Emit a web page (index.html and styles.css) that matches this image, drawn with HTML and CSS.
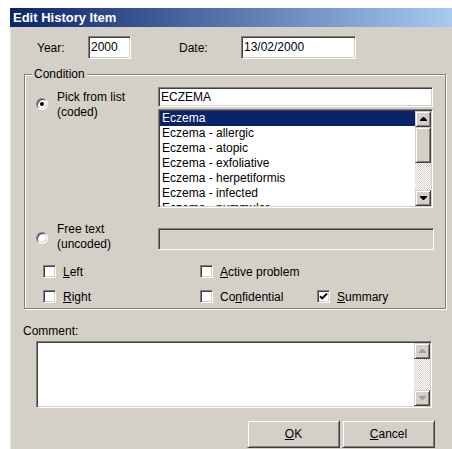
FILE: index.html
```html
<!DOCTYPE html>
<html>
<head>
<meta charset="utf-8">
<title>Edit History Item</title>
<link rel="stylesheet" href="styles.css">
</head>
<body>
<div class="page">
  <div class="dialog">
    <div class="titlebar">Edit History Item</div>

    <div class="daterow">
      <span class="lbl-year">Year:</span>
      <div class="field year">2000</div>
      <span class="lbl-date">Date:</span>
      <div class="field date">13/02/2000</div>
    </div>

    <div class="group">
      <span class="legend">Condition</span>
      <div class="cond-grid">
        <div class="opt opt-list">
          <span class="radio checked"></span>
          <span class="opt-text">Pick from list<br>(coded)</span>
        </div>
        <div class="picker">
          <div class="field search">ECZEMA</div>
          <div class="listbox">
            <div class="items">
              <div class="item selected">Eczema</div>
              <div class="item">Eczema - allergic</div>
              <div class="item">Eczema - atopic</div>
              <div class="item">Eczema - exfoliative</div>
              <div class="item">Eczema - herpetiformis</div>
              <div class="item">Eczema - infected</div>
              <div class="item">Eczema - nummular</div>
            </div>
            <div class="vscroll">
              <div class="sbtn"><svg width="7" height="4" viewBox="0 0 7 4"><path d="M3 0h1l3 3v1H0V3z"/></svg></div>
              <div class="thumb"></div>
              <div class="track"></div>
              <div class="sbtn"><svg width="7" height="4" viewBox="0 0 7 4"><path d="M0 0h7v1L4 4H3L0 1z"/></svg></div>
            </div>
          </div>
        </div>
        <div class="opt opt-free">
          <span class="radio"></span>
          <span class="opt-text">Free text<br>(uncoded)</span>
        </div>
        <div class="field freetext"></div>
      </div>

      <div class="checks">
        <label class="check"><span class="box"></span><span><u>L</u>eft</span></label>
        <label class="check"><span class="box"></span><span><u>A</u>ctive problem</span></label>
        <span></span>
        <label class="check"><span class="box"></span><span><u>R</u>ight</span></label>
        <label class="check"><span class="box"></span><span>Co<u>n</u>fidential</span></label>
        <label class="check"><span class="box"><svg width="9" height="9" viewBox="0 0 9 9"><path d="M1 4.2l2.2 2.2L8 1.6" stroke="#000" stroke-width="2" fill="none"/></svg></span><span><u>S</u>ummary</span></label>
      </div>
    </div>

    <div class="comment-lbl">Comment:</div>
    <div class="memo">
      <div class="memo-text"></div>
      <div class="vscroll disabled">
        <div class="sbtn"><svg width="7" height="4" viewBox="0 0 7 4"><path d="M3 0h1l3 3v1H0V3z"/></svg></div>
        <div class="track"></div>
        <div class="sbtn"><svg width="7" height="4" viewBox="0 0 7 4"><path d="M0 0h7v1L4 4H3L0 1z"/></svg></div>
      </div>
    </div>

    <div class="buttons">
      <button class="btn"><u>O</u>K</button>
      <button class="btn"><u>C</u>ancel</button>
    </div>
  </div>
</div>
</body>
</html>
```

FILE: styles.css
```css
* { box-sizing: border-box; }

html, body {
  margin: 0;
  background: #fff;
}

body {
  font-family: "Liberation Sans", Arial, sans-serif;
  font-size: 12px;
  color: #000;
}

.page {
  padding: 8px 0 0 10px;
}

.dialog {
  width: 442px;
  height: 441px;
  background: #d4d0c8;
  display: flex;
  flex-direction: column;
  box-shadow: inset 1px 0 0 #e4e2dc;
}

/* caption bar */
.titlebar {
  height: 19px;
  line-height: 19px;
  padding-left: 3px;
  font-weight: bold;
  font-size: 13px;
  color: #fff;
  background: linear-gradient(to right, #0a246a, #a6caf0);
  white-space: nowrap;
}

/* sunken edit field */
.field {
  background: #fff;
  border: 1px solid;
  border-color: #808080 #fff #fff #808080;
  box-shadow: inset 1px 1px 0 #404040, inset -1px -1px 0 #d4d0c8;
  padding: 0 2px;
  white-space: nowrap;
  overflow: hidden;
}

.daterow {
  display: flex;
  align-items: center;
  height: 23px;
  margin-top: 9px;
  padding-left: 27px;
}

.lbl-year { width: 51px; }

.year {
  width: 43px;
  height: 23px;
  line-height: 21px;
}

.lbl-date {
  margin-left: 48px;
  width: 62px;
}

.date {
  width: 115px;
  height: 23px;
  line-height: 21px;
}

/* etched group box */
.group {
  position: relative;
  margin: 15px 0 0 14px;
  width: 422px;
  height: 235px;
  border: 1px solid #808080;
  box-shadow: inset 1px 1px 0 #fff, 1px 1px 0 #fff;
  padding-top: 12px;
}

.legend {
  position: absolute;
  top: -8px;
  left: 7px;
  padding: 0 2px;
  line-height: 14px;
  background: #d4d0c8;
}

.cond-grid {
  display: grid;
  grid-template-columns: 133px 276px;
  row-gap: 14px;
}

.opt {
  display: flex;
  align-items: flex-start;
  padding-left: 11px;
  line-height: 15px;
}

.opt-list { margin-top: 3px; }

.opt-text { margin-left: 9px; }

.radio {
  position: relative;
  flex: none;
  width: 12px;
  height: 12px;
  border-radius: 50%;
  background: #fff;
  border: 1px solid;
  border-color: #808080 #fff #fff #808080;
  box-shadow: inset 1px 1px 0 #404040, inset -1px -1px 0 #d4d0c8;
}

.opt-list .radio { margin-top: 8px; }
.opt-free .radio { margin-top: 10px; }

.radio.checked::after {
  content: "";
  position: absolute;
  left: 3px;
  top: 3px;
  width: 4px;
  height: 4px;
  border-radius: 50%;
  background: #000;
}

.picker {
  display: flex;
  flex-direction: column;
  gap: 2px;
  width: 275px;
}

.search {
  height: 20px;
  line-height: 18px;
}

.listbox {
  display: flex;
  height: 99px;
  background: #fff;
  border: 1px solid;
  border-color: #808080 #fff #fff #808080;
  box-shadow: inset 1px 1px 0 #404040, inset -1px -1px 0 #d4d0c8;
  padding: 1px;
}

.items {
  flex: 1;
  overflow: hidden;
}

.item {
  height: 15px;
  line-height: 15px;
  padding-left: 2px;
  white-space: nowrap;
}

.item.selected {
  background: #0a246a;
  color: #fff;
}

/* classic scroll bar */
.vscroll {
  flex: none;
  width: 16px;
  display: flex;
  flex-direction: column;
}

.sbtn, .thumb {
  background: #d4d0c8;
  border: 1px solid;
  border-color: #d4d0c8 #404040 #404040 #d4d0c8;
  box-shadow: inset 1px 1px 0 #fff, inset -1px -1px 0 #808080;
}

.sbtn {
  height: 16px;
  display: flex;
  align-items: center;
  justify-content: center;
}

.sbtn svg { fill: #000; }

.thumb { height: 36px; }

.track {
  flex: 1;
  background: repeating-conic-gradient(#fff 0 25%, #d4d0c8 0 50%) 0 0 / 2px 2px;
}

.vscroll.disabled .sbtn svg {
  fill: #a0a0a0;
}

.freetext {
  margin-top: 6px;
  height: 22px;
  background: #d4d0c8;
}

/* check boxes */
.checks {
  display: grid;
  grid-template-columns: 157px 117px auto;
  row-gap: 12px;
  margin-top: 13px;
  padding-left: 18px;
}

.check {
  display: flex;
  align-items: center;
  gap: 7px;
  height: 13px;
  white-space: nowrap;
}

.box {
  flex: none;
  width: 13px;
  height: 13px;
  background: #fff;
  border: 1px solid;
  border-color: #808080 #fff #fff #808080;
  box-shadow: inset 1px 1px 0 #404040, inset -1px -1px 0 #d4d0c8;
  display: flex;
  align-items: center;
  justify-content: center;
}

.comment-lbl {
  margin-top: 15px;
  padding-left: 13px;
  line-height: 14px;
}

.memo {
  display: flex;
  margin: 3px 0 0 26px;
  width: 396px;
  height: 67px;
  background: #fff;
  border: 1px solid;
  border-color: #808080 #fff #fff #808080;
  box-shadow: inset 1px 1px 0 #404040, inset -1px -1px 0 #d4d0c8;
  padding: 1px;
}

.memo-text { flex: 1; }

.buttons {
  display: flex;
  justify-content: flex-end;
  gap: 2px;
  margin-top: 12px;
  padding-right: 17px;
}

.btn {
  width: 93px;
  height: 28px;
  font: inherit;
  color: #000;
  background: #d4d0c8;
  border: 1px solid;
  border-color: #d4d0c8 #404040 #404040 #d4d0c8;
  box-shadow: inset 1px 1px 0 #fff, inset -1px -1px 0 #808080;
  padding: 0;
}
```
